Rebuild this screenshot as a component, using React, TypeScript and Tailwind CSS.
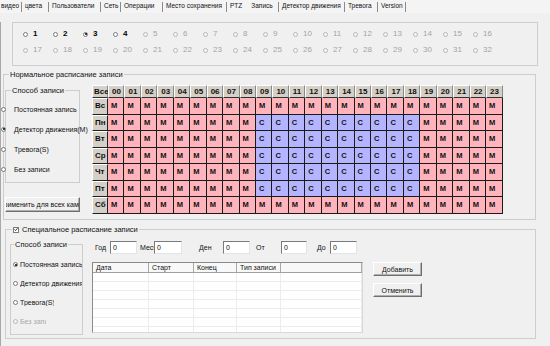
import React from 'react';

const tabs: { label: string; w: number; pl: number; active?: boolean; sep?: boolean }[] = [
  { label: 'видео', w: 22, pl: 1, sep: true },
  { label: 'цвета', w: 27, pl: 3, sep: true },
  { label: 'Пользователи', w: 52, pl: 3, sep: true },
  { label: 'Сеть', w: 20, pl: 3, sep: true },
  { label: 'Операции', w: 42, pl: 3, sep: true },
  { label: 'Место сохранения', w: 64, pl: 3, sep: true },
  { label: 'PTZ', w: 19, pl: 3 },
  { label: 'Запись', w: 33, pl: 0, active: true, sep: true },
  { label: 'Детектор движения', w: 66, pl: 3, sep: true },
  { label: 'Тревога', w: 33, pl: 3, sep: true },
  { label: 'Version', w: 28, pl: 3, sep: true },
];

const hours = Array.from({ length: 24 }, (_, i) => String(i).padStart(2, '0'));
const days = ['Вс', 'Пн', 'Вт', 'Ср', 'Чт', 'Пт', 'Сб'];

const Radio = ({ checked = false, disabled = false }: { checked?: boolean; disabled?: boolean }) => (
  <span
    className={`w-[5px] h-[5px] shrink-0 rounded-full border flex items-center justify-center ${
      disabled ? 'border-[#b8b8b8] bg-[#f4f4f4]' : 'border-[#7a7a7a] bg-white'
    }`}
  >
    {checked && <span className="w-[2px] h-[2px] rounded-full bg-black" />}
  </span>
);

const WinButton = ({ children, className = '' }: { children: React.ReactNode; className?: string }) => (
  <div
    className={`flex items-center justify-center overflow-hidden whitespace-nowrap bg-[#f0f0f0] border-t border-l border-[#ffffff] border-r border-b border-r-[#6f6f6f] border-b-[#6f6f6f] shadow-[inset_-1px_-1px_0_#b0b0b0] ${className}`}
  >
    {children}
  </div>
);

const Field = ({ value }: { value: string }) => (
  <div className="h-[13px] bg-white border-t border-l border-[#7a7a7a] border-r border-b border-r-[#e4e4e4] border-b-[#e4e4e4] flex items-center pl-[2px]">
    {value}
  </div>
);

const tableCols = [
  { label: 'Дата', w: 56 },
  { label: 'Старт', w: 45 },
  { label: 'Конец', w: 43 },
  { label: 'Тип записи', w: 44 },
  { label: '', w: 81 },
];

export default function App() {
  return (
    <div className="w-[550px] h-[346px] bg-[#f0f0f0] overflow-hidden text-[7px] leading-none text-[#111] font-['Liberation_Sans',Arial,sans-serif]">
      {/* tabs */}
      <div className="h-[13px] flex items-center bg-[#f4f4f4] text-[6.5px]">
        {tabs.map((t) => (
          <div
            key={t.label}
            style={{ width: t.w, paddingLeft: t.pl }}
            className={`h-[10px] flex items-center whitespace-nowrap shrink-0 overflow-hidden ${
              t.active ? 'justify-center' : ''
            } ${t.sep ? 'border-r border-[#8a8a8a]' : ''}`}
          >
            {t.label}
          </div>
        ))}
      </div>

      <div className="h-[333px] border-l border-[#a8a8a8]">
        {/* cameras */}
        <div className="ml-[11px] mt-[9px] w-[526px] h-[44px] border border-[#cdcdcd] pt-[3px] pl-[10px]">
          {[0, 1].map((r) => (
            <div key={r} className="h-[16px] flex items-center">
              {Array.from({ length: 16 }, (_, i) => {
                const n = r * 16 + i + 1;
                const on = n <= 4;
                return (
                  <div key={n} className="w-[30px] flex items-center gap-[5px]">
                    <Radio checked={n === 3} disabled={!on} />
                    <span className={on ? 'font-bold text-black text-[8px]' : 'text-[#a4a4a4] text-[8px]'}>{n}</span>
                  </div>
                );
              })}
            </div>
          ))}
        </div>

        {/* normal schedule */}
        <fieldset className="ml-[2px] mt-[4px] w-[533px] h-[150px] border border-[#cdcdcd] min-w-0">
          <legend className="ml-[5px] px-[1px] leading-[9px] text-[7.5px]">Нормальное расписание записи</legend>
          <div className="flex">
            <div className="w-[76px] shrink-0">
              <fieldset className="ml-[1px] mt-[7px] w-[75px] h-[97px] border border-[#cdcdcd] min-w-0">
                <legend className="ml-[5px] px-[1px] leading-[9px] text-[7.5px]">Способ записи</legend>
                <div className="pt-[4px] -ml-[5px]">
                  {['Постоянная запись', 'Детектор движения(M)', 'Тревога(S)', 'Без записи'].map((l, i) => (
                    <div key={l} className="h-[20px] flex items-center gap-[8px] whitespace-nowrap">
                      <Radio checked={i === 1} />
                      <span>{l}</span>
                    </div>
                  ))}
                </div>
              </fieldset>
              <WinButton className="ml-[1px] mt-[14px] w-[75px] h-[15px]">Применить для всех камер</WinButton>
            </div>

            <div className="ml-[12px] mt-[6px] grid grid-cols-[16px_repeat(24,16.45px)] grid-rows-[13px_repeat(7,16.5px)] font-bold">
              <div className="bg-[#d4d0c8] border-t border-l border-white border-r border-b border-r-[#8a8a8a] border-b-[#303030] flex items-center pl-[1px] text-[8px]">
                Все
              </div>
              {hours.map((h) => (
                <div
                  key={h}
                  className="bg-[#d4d0c8] border-t border-l border-white border-r border-b border-r-[#8a8a8a] border-b-[#303030] flex items-center pl-[3px] text-[8px]"
                >
                  {h}
                </div>
              ))}
              {days.map((d, di) => (
                <React.Fragment key={d}>
                  <div className="bg-[#d4d0c8] border-t border-l border-white border-r border-b border-r-[#202020] border-b-[#202020] flex items-center pl-[2px] text-[8px]">
                    {d}
                  </div>
                  {hours.map((_, hi) => {
                    const c = di >= 1 && di <= 5 && hi >= 9 && hi <= 18;
                    return (
                      <div
                        key={hi}
                        className={`${
                          c ? 'bg-[#b4b4ff]' : 'bg-[#ffb4bc]'
                        } border-r border-b border-[#1a1a1a] flex items-center pl-[3px] text-[7.5px]`}
                      >
                        {c ? 'C' : 'M'}
                      </div>
                    );
                  })}
                </React.Fragment>
              ))}
            </div>
          </div>
        </fieldset>

        {/* special schedule */}
        <fieldset className="ml-[4px] mt-[5px] w-[531px] h-[114px] border border-[#cdcdcd] min-w-0">
          <legend className="ml-[6px] px-[1px] leading-[9px] text-[7.5px]">
            <span className="flex items-center gap-[3px]">
              <span className="w-[6px] h-[6px] bg-white border border-[#7a7a7a] flex items-center justify-center">
                <svg width="5" height="5" viewBox="0 0 5 5">
                  <path d="M0.6 2.4 L1.9 3.8 L4.4 0.9" stroke="#111" strokeWidth="1" fill="none" />
                </svg>
              </span>
              <span>Специальное расписание записи</span>
            </span>
          </legend>
          <div className="flex">
            <fieldset className="ml-[4px] mt-[6px] w-[73px] h-[95px] border border-[#cdcdcd] shrink-0 min-w-0">
              <legend className="ml-[3px] px-[1px] leading-[9px] text-[7.5px]">Способ записи</legend>
              <div className="pt-[6px] pl-[2px]">
                {[
                  { l: 'Постоянная запись', w: 64 },
                  { l: 'Детектор движения', w: 64 },
                  { l: 'Тревога(S)', w: 34 },
                  { l: 'Без записи', w: 26, dis: true },
                ].map((r, i) => (
                  <div key={r.l} className="h-[19px] flex items-center gap-[2px] whitespace-nowrap">
                    <Radio checked={i === 0} disabled={r.dis} />
                    <span style={{ width: r.w }} className={`overflow-hidden ${r.dis ? 'text-[#a8a8a8]' : ''}`}>
                      {r.l}
                    </span>
                  </div>
                ))}
              </div>
            </fieldset>

            <div className="ml-[9px] mt-[7px]">
              <div className="flex items-center h-[13px]">
                <span className="w-[18px] pl-[3px]">Год</span>
                <div className="w-[27px]"><Field value="0" /></div>
                <span className="w-[17px] pl-[3px] overflow-hidden whitespace-nowrap">Месяц</span>
                <div className="w-[28px]"><Field value="0" /></div>
                <span className="w-[41px] pl-[17px]">Ден</span>
                <div className="w-[27px]"><Field value="0" /></div>
                <span className="w-[31px] pl-[6px]">От</span>
                <div className="w-[26px]"><Field value="0" /></div>
                <span className="w-[23px] pl-[10px]">До</span>
                <div className="w-[27px]"><Field value="0" /></div>
              </div>

              <div className="flex mt-[8px]">
                <div className="w-[271px] h-[71px] bg-white border-t border-l border-[#8a8a8a] border-r border-b border-r-[#d8d8d8] border-b-[#d8d8d8] overflow-hidden">
                  <div className="flex h-[10px] bg-[#f8f8f8] border-b border-[#a0a0a0]">
                    {tableCols.map((c, i) => (
                      <div
                        key={i}
                        style={{ width: c.w }}
                        className="shrink-0 flex items-center pl-[3px] border-r border-[#a8a8a8]"
                      >
                        {c.label}
                      </div>
                    ))}
                  </div>
                  {Array.from({ length: 7 }, (_, r) => (
                    <div key={r} className="flex h-[9px] border-b border-[#ececec]">
                      {tableCols.map((c, i) => (
                        <div key={i} style={{ width: c.w }} className="shrink-0 border-r border-[#ececec]" />
                      ))}
                    </div>
                  ))}
                </div>
                <div className="ml-[10px] flex flex-col gap-[7px]">
                  <WinButton className="w-[49px] h-[14px]">Добавить</WinButton>
                  <WinButton className="w-[49px] h-[14px]">Отменить</WinButton>
                </div>
              </div>
            </div>
          </div>
        </fieldset>
      </div>
    </div>
  );
}
